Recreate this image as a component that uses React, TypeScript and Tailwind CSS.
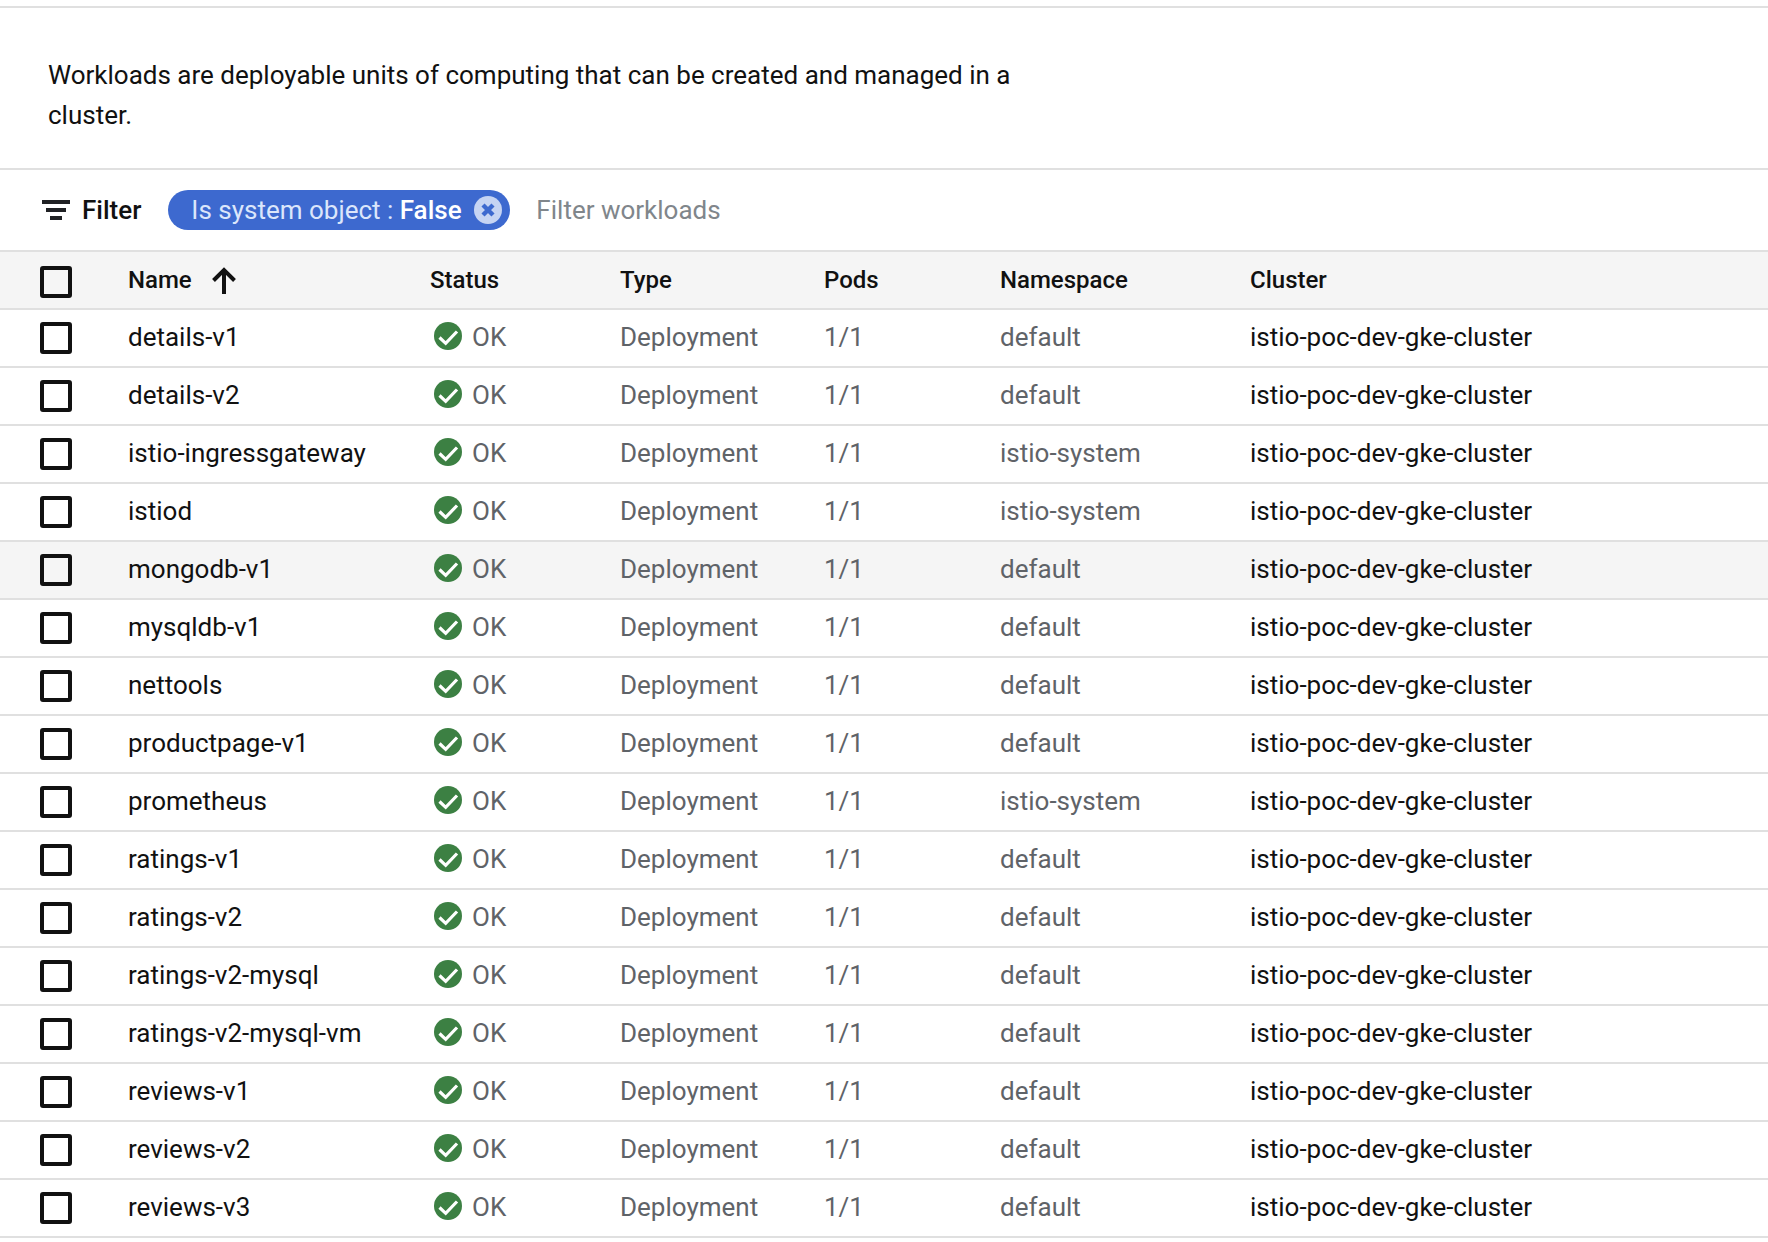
const rows = [
  ['details-v1', 'default'],
  ['details-v2', 'default'],
  ['istio-ingressgateway', 'istio-system'],
  ['istiod', 'istio-system'],
  ['mongodb-v1', 'default'],
  ['mysqldb-v1', 'default'],
  ['nettools', 'default'],
  ['productpage-v1', 'default'],
  ['prometheus', 'istio-system'],
  ['ratings-v1', 'default'],
  ['ratings-v2', 'default'],
  ['ratings-v2-mysql', 'default'],
  ['ratings-v2-mysql-vm', 'default'],
  ['reviews-v1', 'default'],
  ['reviews-v2', 'default'],
  ['reviews-v3', 'default'],
];

const grid = 'grid grid-cols-[128px_302px_190px_204px_176px_250px_1fr] items-center';

function Checkbox({ className = '' }: { className?: string }) {
  return <div className={`ml-10 w-8 h-8 rounded-[3px] border-4 border-[#111] ${className}`} />;
}

function OkIcon() {
  return (
    <svg width="28" height="28" viewBox="0 0 28 28" className="ml-1 mr-[10px] -mt-[2px] shrink-0">
      <circle cx="14" cy="14" r="14" fill="#3c8043" />
      <path d="M5.5 15.5l6.2 5.8L23 9.5" fill="none" stroke="#fff" strokeWidth="3.2" />
    </svg>
  );
}

export default function App() {
  return (
    <div className="w-[1768px] h-[1242px] bg-white overflow-hidden text-[26px] text-[#202124] font-['Roboto',sans-serif]">
      <div className="h-[170px] pt-[6px] border-b-2 border-[#e0e0e0]">
        <div className="border-t-2 border-[#e0e0e0]" />
        <p className="pl-12 pt-[47px] w-[1040px] leading-10 text-[#111]">
          Workloads are deployable units of computing that can be created and managed in a cluster.
        </p>
      </div>

      <div className="h-[82px] flex items-center border-b-2 border-[#e0e0e0]">
        <svg width="28" height="20" viewBox="0 0 28 20" className="ml-[42px] shrink-0">
          <path d="M0 0h28v4H0zM4 8h20v4H4zM8 16h12v4H8z" fill="#202124" />
        </svg>
        <span className="ml-3 font-medium text-[#111]">Filter</span>
        <div className="ml-[27px] h-10 w-[342px] rounded-full bg-[#3d69cf] flex items-center pl-[23px] pr-2 whitespace-nowrap">
          <span className="text-[#dbe6fb]">Is system object :&nbsp;</span>
          <span className="font-medium text-white">False</span>
          <svg width="28" height="28" viewBox="0 0 28 28" className="ml-auto shrink-0">
            <circle cx="14" cy="14" r="14" fill="#c6d4f3" />
            <path d="M9 9l10 10M19 9L9 19" stroke="#3d69cf" strokeWidth="4.4" />
          </svg>
        </div>
        <span className="ml-[26px] text-[#80868b]">Filter workloads</span>
      </div>

      <div className={`${grid} h-[58px] bg-[#f5f5f5] border-b-2 border-[#e0e0e0] font-medium text-[#111] text-[24px]`}>
        <Checkbox className="mt-1" />
        <div className="flex items-center">
          Name
          <svg width="24" height="27" viewBox="0 0 24 27" className="ml-5">
            <path d="M12 27V3M1.5 13.5L12 3l10.5 10.5" fill="none" stroke="#111" strokeWidth="4" />
          </svg>
        </div>
        <div>Status</div>
        <div>Type</div>
        <div>Pods</div>
        <div>Namespace</div>
        <div>Cluster</div>
      </div>

      {rows.map(([name, ns]) => (
        <div
          key={name}
          className={`${grid} h-[58px] pb-[2px] border-b-2 border-[#e0e0e0] ${name === 'mongodb-v1' ? 'bg-[#f5f5f5]' : ''}`}
        >
          <Checkbox className="mt-[2px]" />
          <div className="text-[#111]">{name}</div>
          <div className="flex items-center text-[#5f6368]">
            <OkIcon />
            OK
          </div>
          <div className="text-[#5f6368]">Deployment</div>
          <div className="text-[#5f6368]">1/1</div>
          <div className="text-[#5f6368]">{ns}</div>
          <div className="text-[#111]">istio-poc-dev-gke-cluster</div>
        </div>
      ))}
    </div>
  );
}
